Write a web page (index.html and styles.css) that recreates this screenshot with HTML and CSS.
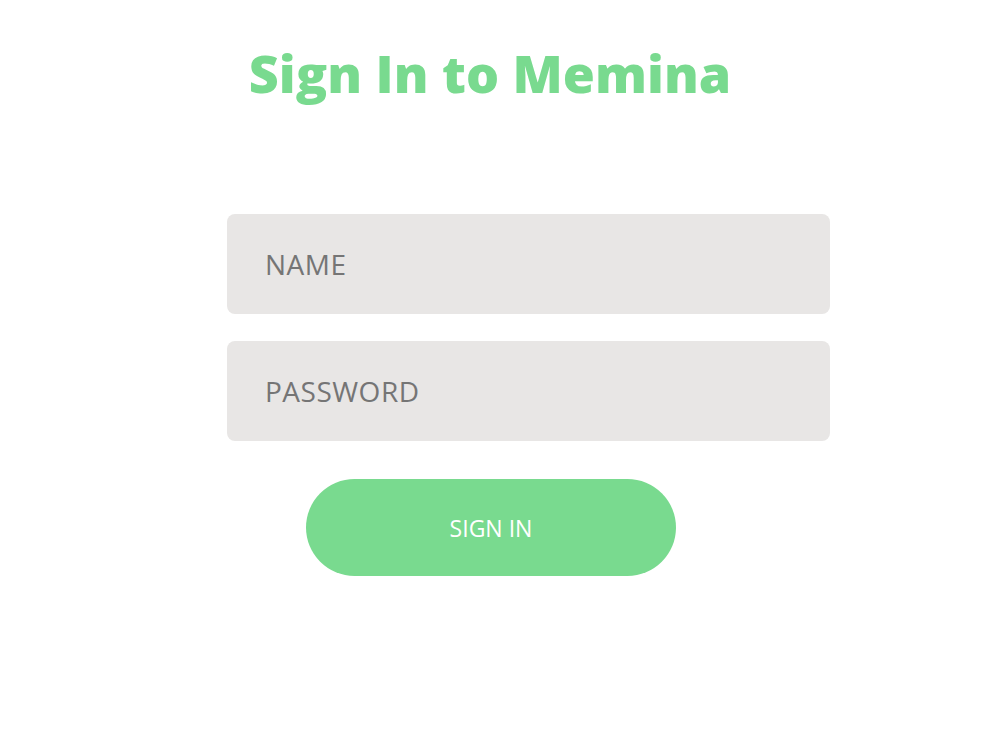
FILE: index.html
```html
<!DOCTYPE html>
<html lang="en">
<head>
<meta charset="utf-8">
<title>Sign In to Memina</title>
<link rel="stylesheet" href="styles.css">
</head>
<body>
  <main class="page">
    <h1 class="title">Sign In to Memina</h1>
    <form class="signin">
      <input class="field" type="text" placeholder="NAME">
      <input class="field" type="password" placeholder="PASSWORD">
      <button class="submit" type="button">SIGN IN</button>
    </form>
  </main>
</body>
</html>
```

FILE: styles.css
```css
html, body {
  margin: 0;
  padding: 0;
  background: #ffffff;
}

.page {
  display: flex;
  flex-direction: column;
  font-family: "Open Sans", "Liberation Sans", sans-serif;
}

.title {
  margin: 37px 20px 0 0;
  text-align: center;
  font-size: 52px;
  font-weight: 800;
  line-height: 72px;
  color: #79da8f;
}

.signin {
  display: flex;
  flex-direction: column;
  align-items: flex-start;
  gap: 27px;
  width: 603px;
  margin: 105px 0 0 227px;
}

.field {
  box-sizing: border-box;
  width: 603px;
  height: 100px;
  padding: 0 38px;
  border: none;
  border-radius: 8px;
  background: #e8e6e5;
  font-family: inherit;
  font-size: 28px;
  letter-spacing: 0.5px;
  color: #757575;
  outline: none;
}

.field::placeholder {
  color: #757575;
  opacity: 1;
}

.submit {
  box-sizing: border-box;
  width: 370px;
  height: 97px;
  margin: 11px 0 0 79px;
  border: none;
  border-radius: 49px;
  background: #79da8f;
  font-family: inherit;
  font-size: 23px;
  color: #ffffff;
  cursor: pointer;
}
```
